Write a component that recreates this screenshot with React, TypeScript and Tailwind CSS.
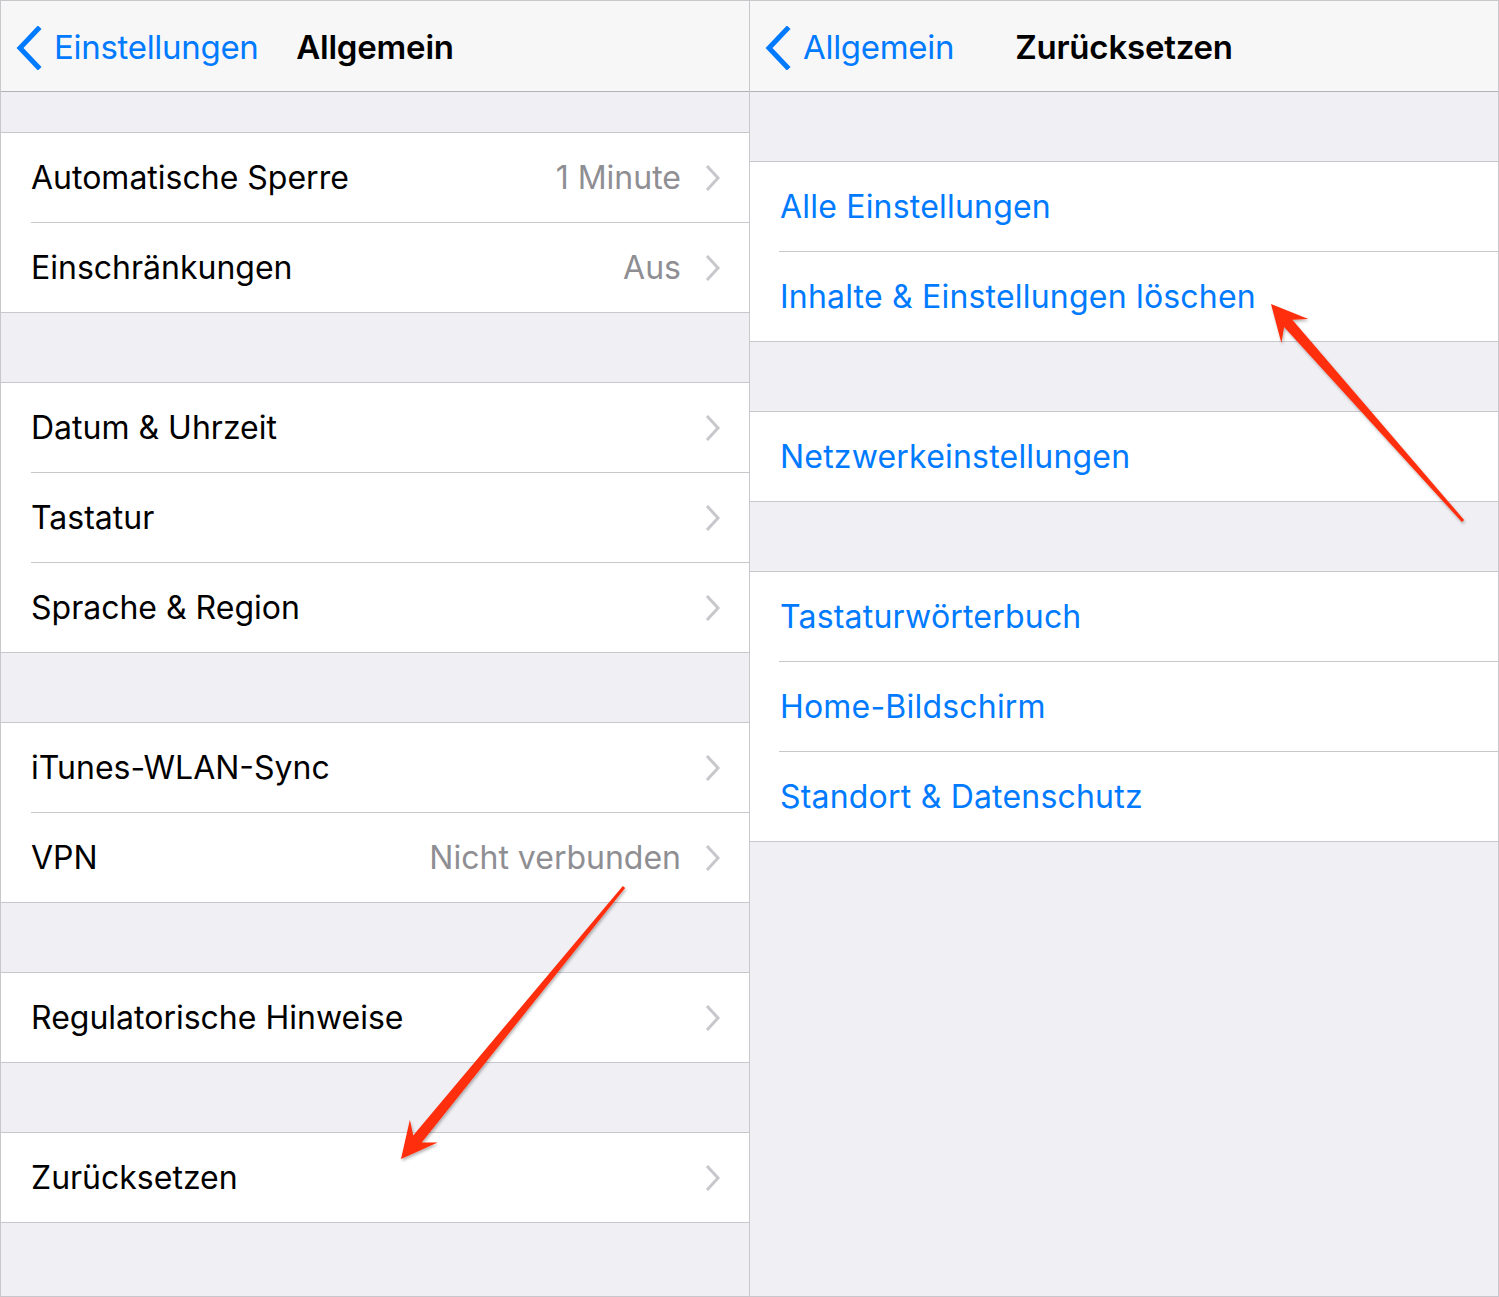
import React from 'react';

type Row = { label: string; value?: string };

const leftGroups: Row[][] = [
    [{ label: 'Automatische Sperre', value: '1 Minute' }, { label: 'Einschränkungen', value: 'Aus' }],
    [{ label: 'Datum & Uhrzeit' }, { label: 'Tastatur' }, { label: 'Sprache & Region' }],
    [{ label: 'iTunes-WLAN-Sync' }, { label: 'VPN', value: 'Nicht verbunden' }],
    [{ label: 'Regulatorische Hinweise' }],
    [{ label: 'Zurücksetzen' }],
];

const rightGroups: string[][] = [
    ['Alle Einstellungen', 'Inhalte & Einstellungen löschen'],
    ['Netzwerkeinstellungen'],
    ['Tastaturwörterbuch', 'Home-Bildschirm', 'Standort & Datenschutz'],
];

const BackChevron = () => (
    <svg width="27" height="44" viewBox="0 0 27 44" className="shrink-0">
        <path d="M23 3 L5 22 L23 41" fill="none" stroke="#007aff" strokeWidth="5" strokeLinecap="square" />
    </svg>
);

const Chevron = () => (
    <svg width="16" height="28" viewBox="0 0 16 28" className="shrink-0">
        <path d="M2 2 L13 14 L2 26" fill="none" stroke="#c7c7cc" strokeWidth="3" />
    </svg>
);

const NavBar: React.FC<{ back: string; title: string }> = ({ back, title }) => (
    <div className="relative h-[91px] bg-[#f7f7f8] border-b border-[#b2b2b6] flex items-center pt-[3px]">
        <div className="flex items-center pl-[14px] gap-[12px] text-[#007aff] text-[33px] z-10">
            <BackChevron />
            <span className="tracking-[-0.3px]">{back}</span>
        </div>
        <div className="absolute inset-0 pt-[3px] flex items-center justify-center text-[33px] font-semibold text-black tracking-[-0.2px]">
            {title}
        </div>
    </div>
);

// skitch-style arrow, tapering shaft
function arrowPoints(tail: [number, number], tip: [number, number]) {
    const dx = tip[0] - tail[0];
    const dy = tip[1] - tail[1];
    const len = Math.hypot(dx, dy);
    const ux = dx / len, uy = dy / len;
    const nx = -uy, ny = ux;
    const at = (back: number, side: number) =>
        `${(tip[0] - ux * back + nx * side).toFixed(1)},${(tip[1] - uy * back + ny * side).toFixed(1)}`;
    return [
        `${tail[0] + nx * 1.5},${tail[1] + ny * 1.5}`,
        at(26, 5.5),
        at(36, 18),
        `${tip[0]},${tip[1]}`,
        at(36, -18),
        at(26, -5.5),
        `${tail[0] - nx * 1.5},${tail[1] - ny * 1.5}`,
    ].join(' ');
}

export default function App() {
    return (
        <div
            className="relative w-[1499px] h-[1297px] border border-[#c8c7cc] bg-[#efeff4] flex overflow-hidden"
            style={{ fontFamily: 'Inter, "Noto Sans", sans-serif' }}
        >
            {/* left pane */}
            <div className="w-[749px] shrink-0 border-r border-[#c8c7cc] flex flex-col">
                <NavBar back="Einstellungen" title="Allgemein" />
                {leftGroups.map((rows, gi) => (
                    <div key={gi} className={`bg-white border-t border-[#c8c7cc] ${gi === 0 ? 'mt-[40px]' : 'mt-[69px]'}`}>
                        {rows.map((r, i) => (
                            <div key={r.label} className="h-[90px] flex flex-col">
                                <div className="flex-1 flex items-center pl-[30px] pr-[28px] text-[32px] text-black">
                                    <span className="flex-1">{r.label}</span>
                                    {r.value && <span className="text-[#8e8e93] mr-[24px]">{r.value}</span>}
                                    <Chevron />
                                </div>
                                <div className={`h-px bg-[#c8c7cc] ${i < rows.length - 1 ? 'ml-[30px]' : ''}`} />
                            </div>
                        ))}
                    </div>
                ))}
            </div>

            {/* right pane */}
            <div className="flex-1 flex flex-col">
                <NavBar back="Allgemein" title="Zurücksetzen" />
                {rightGroups.map((rows, gi) => (
                    <div key={gi} className="mt-[69px] bg-white border-t border-[#c8c7cc]">
                        {rows.map((label, i) => (
                            <div key={label} className="h-[90px] flex flex-col">
                                <div className="flex-1 flex items-center pl-[30px] text-[32px] text-[#007aff] tracking-[0.2px]">
                                    {label}
                                </div>
                                <div className={`h-px bg-[#c8c7cc] ${i < rows.length - 1 ? 'ml-[29px]' : ''}`} />
                            </div>
                        ))}
                    </div>
                ))}
            </div>

            {/* annotation arrows */}
            <svg className="absolute left-0 top-0 pointer-events-none" width="1499" height="1297">
                <defs>
                    <filter id="sh" x="-20%" y="-20%" width="140%" height="140%">
                        <feDropShadow dx="1" dy="2" stdDeviation="1.5" floodColor="#000" floodOpacity="0.3" />
                    </filter>
                </defs>
                <polygon points={arrowPoints([623, 886], [400, 1158])} fill="#ff2d0a" filter="url(#sh)" />
                <polygon points={arrowPoints([1462, 520], [1270, 303])} fill="#ff2d0a" filter="url(#sh)" />
            </svg>
        </div>
    );
}
